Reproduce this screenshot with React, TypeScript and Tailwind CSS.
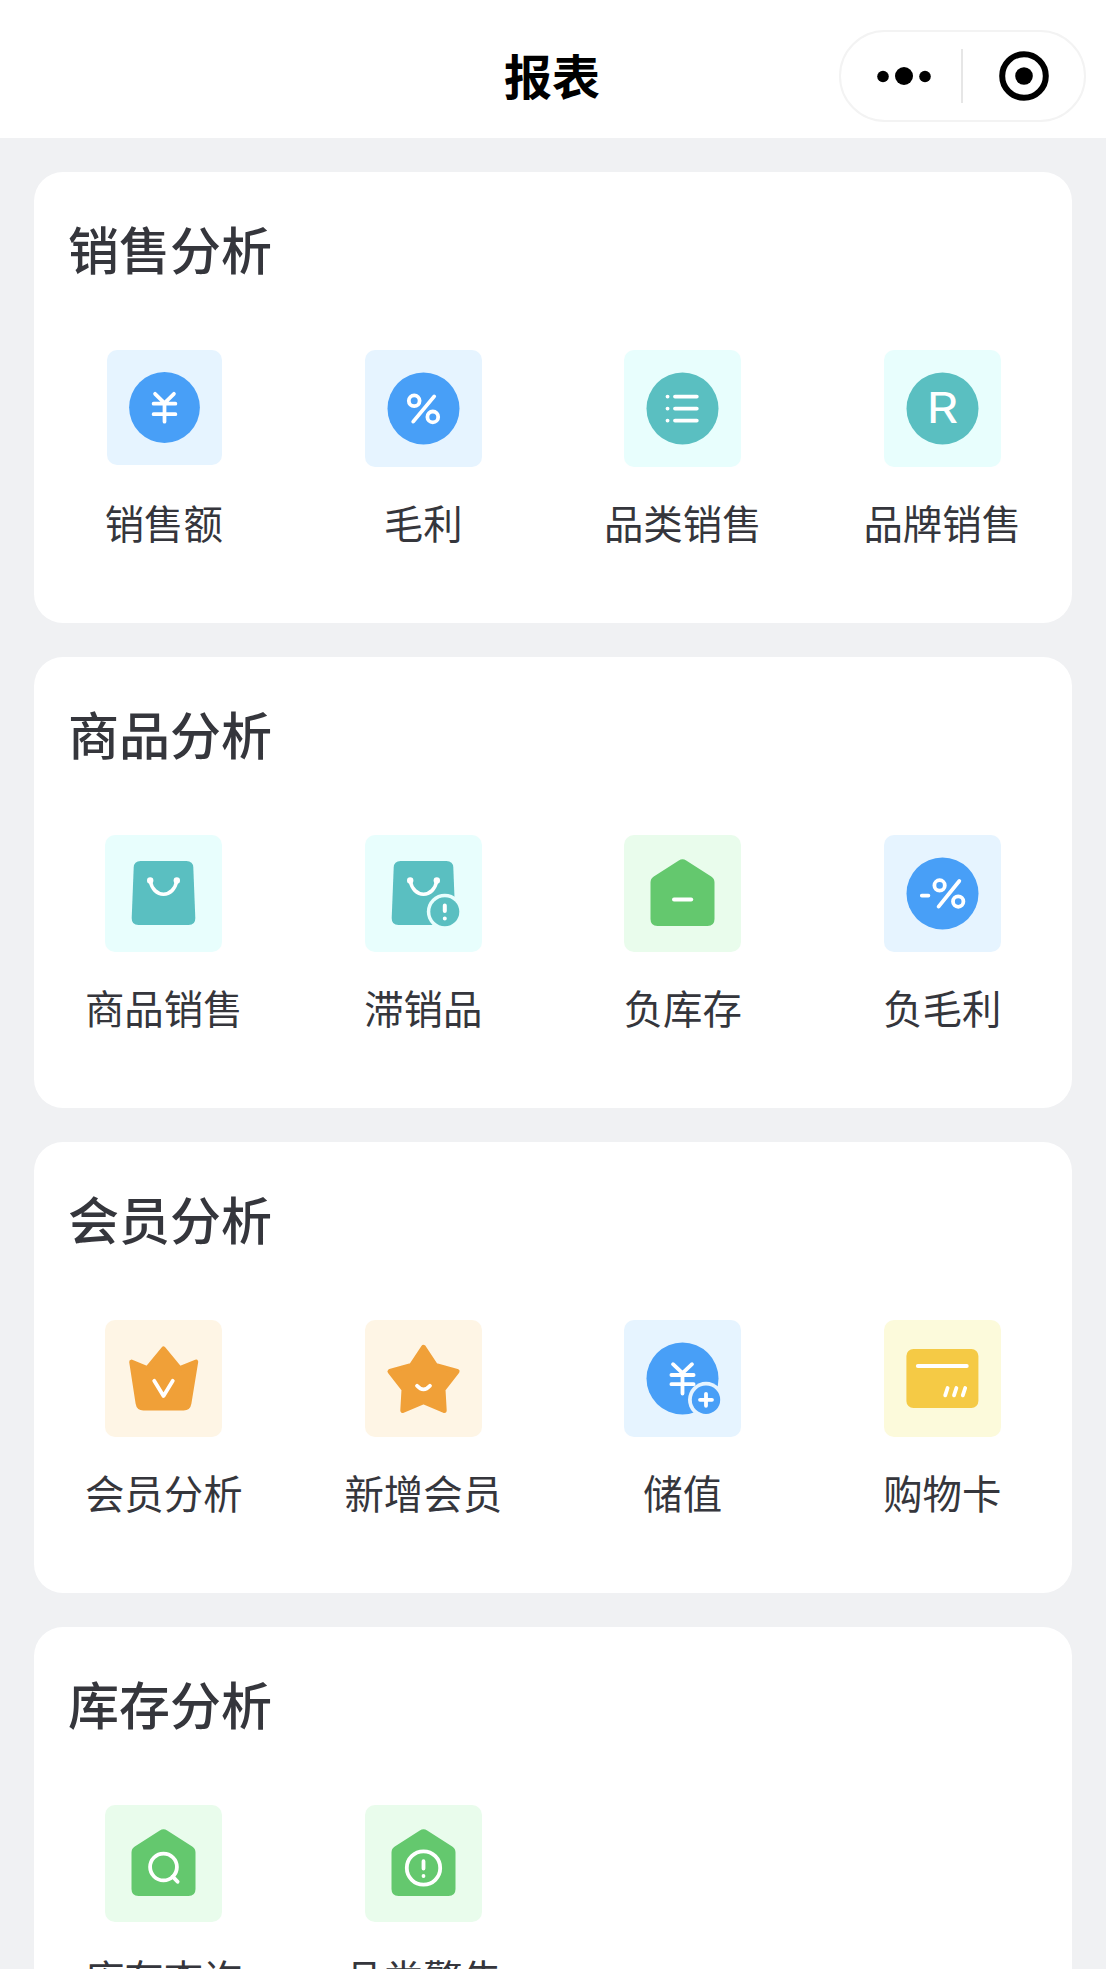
// src/pages/ReportPage.tsx
import React from 'react';

type ReportItem = {
  label: string;
  tile: string;
  icon: React.ReactNode;
  size?: string;
};

type ReportSection = {
  title: string;
  items: ReportItem[];
};

const BLUE = '#489FF7';
const TEAL = '#5ABFC1';
const GREEN = '#64C86E';
const ORANGE = '#F0A038';
const YELLOW = '#F5CA45';

// White line work shared by all icons
const Lines: React.FC<{ children: React.ReactNode; width?: number }> = ({ children, width = 3.8 }) => (
  <g fill="none" stroke="#fff" strokeWidth={width} strokeLinecap="round" strokeLinejoin="round">
    {children}
  </g>
);

const Disc: React.FC<{ color: string }> = ({ color }) => <circle cx="58.5" cy="58.5" r="36" fill={color} />;

const House: React.FC = () => (
  <path
    d="M54.8 25.4Q58.5 23 62.2 25.4L87.2 41.6Q90.5 43.8 90.5 47.5V84Q90.5 91 83.5 91H33.5Q26.5 91 26.5 84V47.5Q26.5 43.8 29.8 41.6Z"
    fill={GREEN}
  />
);

const Bag: React.FC = () => (
  <>
    <path
      d="M35.6 26H81.4Q88 26 88.3 32.5L90.3 83Q90.5 90 83.5 90H33.5Q26.5 90 26.7 83L28.7 32.5Q29 26 35.6 26Z"
      fill={TEAL}
    />
    <Lines width={3.6}>
      <path d="M45.2 46C46.8 54 52 59.2 58.5 59.2S70.2 54 71.8 46" />
    </Lines>
    <circle cx="45.2" cy="45.4" r="3.2" fill="#fff" />
    <circle cx="71.8" cy="45.4" r="3.2" fill="#fff" />
  </>
);

const YenIcon = (
  <>
    <Disc color={BLUE} />
    <Lines>
      <path d="M48.9 44.6L58.5 54L68.1 44.6M58.5 54V73M47.4 54.6H69.6M47.4 65.3H69.6" />
    </Lines>
  </>
);

const PercentIcon = (
  <>
    <Disc color={BLUE} />
    <Lines>
      <circle cx="49.2" cy="50.8" r="5.4" />
      <circle cx="67.8" cy="66.9" r="5.4" />
      <path d="M69.2 46.4L48.2 71.6" />
    </Lines>
  </>
);

const ListIcon = (
  <>
    <Disc color={TEAL} />
    <Lines>
      <path d="M51 46.6H72.8M51 58.6H72.8M51 70.6H72.8" />
      <path d="M43.5 46.6H43.6M43.5 58.6H43.6M43.5 70.6H43.6" />
    </Lines>
  </>
);

const BrandIcon = (
  <>
    <Disc color={TEAL} />
    <text
      transform="translate(42.6 73.4) scale(1.18 1)"
      fill="#fff"
      className="font-['Inter',sans-serif] text-[42px] font-normal"
    >
      R
    </text>
  </>
);

const SlowBagIcon = (
  <>
    <Bag />
    <circle cx="79.8" cy="76.7" r="18" fill="#E8FEFD" />
    <circle cx="79.8" cy="76.7" r="14.5" fill={TEAL} />
    <Lines width={4}>
      <path d="M79.8 70.4V76M79.8 83.4V83.5" />
    </Lines>
  </>
);

const NegativeStockIcon = (
  <>
    <House />
    <Lines width={4}>
      <path d="M50 64.5H67.2" />
    </Lines>
  </>
);

const NegativePercentIcon = (
  <>
    <Disc color={BLUE} />
    <Lines>
      <path d="M37.8 60.6H44.4M75.3 46L54.6 71.6" />
      <circle cx="55.6" cy="50.4" r="5.2" />
      <circle cx="74.2" cy="66.6" r="5.2" />
    </Lines>
  </>
);

const CrownIcon = (
  <>
    <path
      d="M58.5 28.6L74.8 48.4L91 41.8L84.2 83.4Q83.4 88.3 78.6 88.3H38.4Q33.6 88.3 32.8 83.4L26.4 41.8L42.2 48.4Z"
      fill={ORANGE}
      stroke={ORANGE}
      strokeWidth="4.4"
      strokeLinejoin="round"
    />
    <Lines>
      <path d="M49.2 60.8L58.5 76L67.8 60.8" />
    </Lines>
  </>
);

const StarIcon = (
  <>
    <path
      d="M58.5 27.4L70.4 45.4L92 51.4L78 69.4L79.2 90.4L58.5 81.6L37.8 90.4L39 69.4L25 51.4L46.6 45.4Z"
      fill={ORANGE}
      stroke={ORANGE}
      strokeWidth="5"
      strokeLinejoin="round"
    />
    <Lines>
      <path d="M52 65.8Q58.5 73 65 65.8" />
    </Lines>
  </>
);

const StoredValueIcon = (
  <>
    <Disc color={BLUE} />
    <Lines>
      <path d="M49 44.2L58.5 53.2L68 44.2M58.5 53.2V73.6M47.4 55H69.6M47.4 64.2H69.6" />
    </Lines>
    <circle cx="82" cy="79.8" r="18" fill="#E6F4FF" />
    <circle cx="82" cy="79.8" r="14.2" fill={BLUE} />
    <Lines>
      <path d="M76 79.8H88M82 73.8V85.8" />
    </Lines>
  </>
);

const CardIcon = (
  <>
    <rect x="22.4" y="29" width="72" height="59" rx="7" fill={YELLOW} />
    <Lines>
      <path d="M33.8 46H82.8" />
      <path d="M63.6 68L61.2 75.4M72.4 68L70 75.4M81.2 68L78.8 75.4" />
    </Lines>
  </>
);

const StockSearchIcon = (
  <>
    <House />
    <Lines>
      <circle cx="58.5" cy="62" r="13.4" />
      <path d="M67.8 71.6L72.6 76.8" />
    </Lines>
  </>
);

const StockAlertIcon = (
  <>
    <House />
    <Lines>
      <circle cx="58.5" cy="63" r="16.7" />
      <path d="M58.5 56.2V63.6M58.5 71V71.1" />
    </Lines>
  </>
);

const sections: ReportSection[] = [
  {
    title: '销售分析',
    items: [
      { label: '销售额', tile: 'bg-[#E6F4FF]', icon: YenIcon, size: 'w-[115px] h-[115px] mb-[2px] ml-px' },
      { label: '毛利', tile: 'bg-[#E6F4FF]', icon: PercentIcon },
      { label: '品类销售', tile: 'bg-[#E8FEFD]', icon: ListIcon },
      { label: '品牌销售', tile: 'bg-[#E8FEFD]', icon: BrandIcon },
    ],
  },
  {
    title: '商品分析',
    items: [
      { label: '商品销售', tile: 'bg-[#E8FEFD]', icon: <Bag /> },
      { label: '滞销品', tile: 'bg-[#E8FEFD]', icon: SlowBagIcon },
      { label: '负库存', tile: 'bg-[#E9FCEC]', icon: NegativeStockIcon },
      { label: '负毛利', tile: 'bg-[#E6F4FF]', icon: NegativePercentIcon },
    ],
  },
  {
    title: '会员分析',
    items: [
      { label: '会员分析', tile: 'bg-[#FEF5E5]', icon: CrownIcon },
      { label: '新增会员', tile: 'bg-[#FEF5E5]', icon: StarIcon },
      { label: '储值', tile: 'bg-[#E6F4FF]', icon: StoredValueIcon },
      { label: '购物卡', tile: 'bg-[#FCFADB]', icon: CardIcon },
    ],
  },
  {
    title: '库存分析',
    items: [
      { label: '库存查询', tile: 'bg-[#E9FCEC]', icon: StockSearchIcon },
      { label: '品类警告', tile: 'bg-[#E9FCEC]', icon: StockAlertIcon },
    ],
  },
];

const ReportPage: React.FC = () => {
  return (
    <div className="h-[1969px] overflow-hidden bg-[#F0F1F3] font-['Noto_Sans_CJK_SC',sans-serif] text-[#35363C]">
      {/* Navigation bar */}
      <header className="grid grid-cols-[1fr_auto_1fr] items-center h-[138px] bg-white pt-[13px]">
        <h1 className="col-start-2 mb-[3px] mr-[2px] text-[48px] leading-[60px] font-bold text-black">报表</h1>
        <div className="flex items-center justify-self-end mr-5 w-[247px] h-[92px] rounded-full border-2 border-[#F3F3F3]">
          <div className="w-[120px] shrink-0 flex justify-center pl-[5px]">
            <svg width="56" height="20" viewBox="0 0 56 20">
              <circle cx="7" cy="10.5" r="5.8" />
              <circle cx="28" cy="10" r="9" />
              <circle cx="49" cy="10.5" r="5.8" />
            </svg>
          </div>
          <div className="w-[2px] h-[54px] bg-[#E6E6E6]" />
          <div className="flex-1 flex justify-center">
            <svg width="50" height="50" viewBox="0 0 50 50">
              <circle cx="25" cy="25" r="21.8" fill="none" stroke="#000" strokeWidth="6" />
              <circle cx="25" cy="25" r="8.8" />
            </svg>
          </div>
        </div>
      </header>

      {/* Report groups */}
      <main className="flex flex-col gap-[34px] px-[34px] pt-[34px]">
        {sections.map((section) => (
          <section key={section.title} className="h-[451px] shrink-0 rounded-[29px] bg-white">
            <h2 className="pl-[34px] pt-[41px] text-[51px] leading-[70px] font-medium">{section.title}</h2>
            <div className="grid grid-cols-4 pt-[67px]">
              {section.items.map((item) => (
                <div key={item.label} className="flex flex-col items-center">
                  <div className={`${item.size ?? 'w-[117px] h-[117px]'} ${item.tile} rounded-[10px]`}>
                    <svg viewBox="0 0 117 117" className="block w-full h-full">
                      {item.icon}
                    </svg>
                  </div>
                  <span className="mt-[28px] text-[39.4px] leading-[54px] whitespace-nowrap">{item.label}</span>
                </div>
              ))}
            </div>
          </section>
        ))}
      </main>
    </div>
  );
};

export default ReportPage;
